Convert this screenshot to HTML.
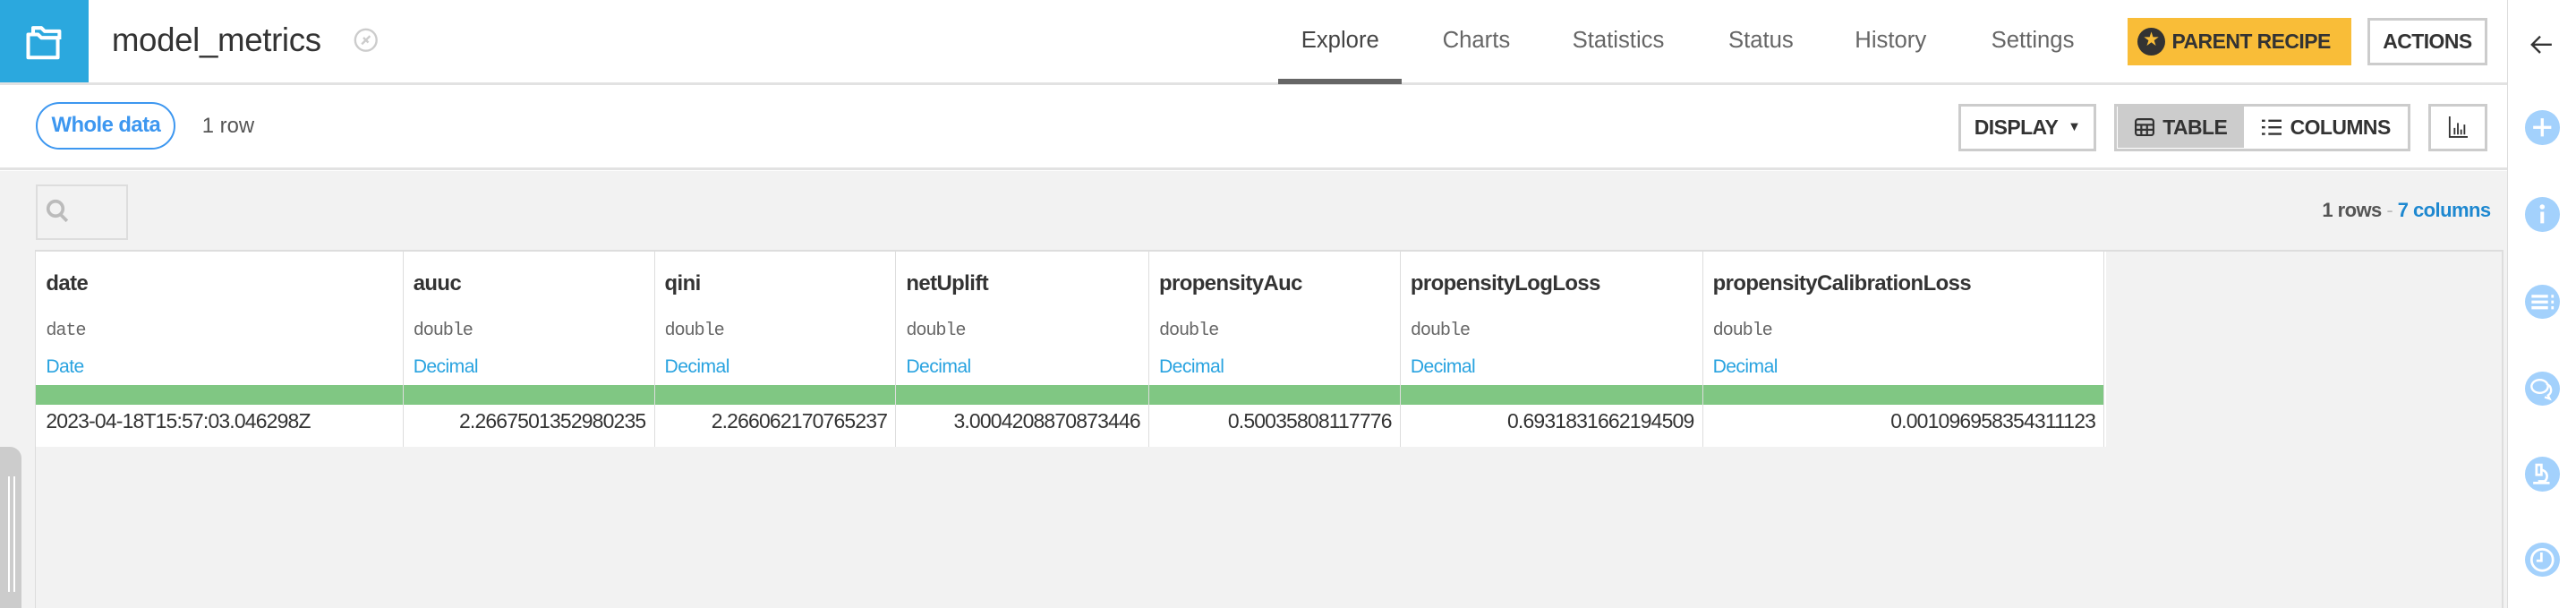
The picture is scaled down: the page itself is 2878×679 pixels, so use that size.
<!DOCTYPE html>
<html><head><meta charset="utf-8"><style>
html,body{margin:0;padding:0;background:#fff;}
body{width:2878px;height:678px;overflow:hidden;}
#w{zoom:1.8355;width:1568px;height:370px;position:relative;font-family:"Liberation Sans",sans-serif;color:#333;overflow:hidden;}
.a{position:absolute;}
.nav{position:absolute;top:17px;font-size:14px;color:#666;}
.btn{position:absolute;box-sizing:border-box;font-size:12.5px;font-weight:bold;display:flex;align-items:center;justify-content:center;letter-spacing:-0.3px;}
.col{position:absolute;top:0;height:119px;border-left:1px solid #ddd;box-sizing:border-box;}
.nm{position:absolute;top:12px;left:6px;font-size:13px;font-weight:bold;letter-spacing:-0.3px;color:#333;}
.ty{position:absolute;top:42px;left:6px;font-family:"Liberation Mono",monospace;font-size:11px;color:#666;letter-spacing:-0.6px;}
.mn{position:absolute;top:64px;left:6px;font-size:11.5px;color:#29a3e0;letter-spacing:-0.3px;}
.v{position:absolute;top:96px;right:5px;font-size:12.5px;color:#333;letter-spacing:-0.45px;}
.ic{position:absolute;left:1537px;width:21px;height:21px;border-radius:50%;background:#a3d1fc;}
</style></head><body><div id="w">
<div class="a" style="left:0;top:0;width:1526px;height:50px;border-bottom:2px solid #e2e2e2;background:#fff"></div>
<div class="a" style="left:0;top:0;width:54px;height:50px;background:#2ba8de"></div>
<svg class="a" style="left:14px;top:12px" width="26" height="26" viewBox="0 0 26 26" fill="none" stroke="#fff" stroke-width="2.2" stroke-linejoin="round"><path d="M3 9h6l2 2h10v12H3z"/><path d="M6 9V5h5l2 2h9v5"/></svg>
<div class="a" style="left:68px;top:13px;font-size:20px;color:#333;letter-spacing:-0.2px">model_metrics</div>
<svg class="a" style="left:215px;top:17px" width="15" height="15" viewBox="0 0 15 15" fill="none" stroke="#ccc" stroke-width="1.3"><circle cx="7.5" cy="7.5" r="6.5"/><path d="M5 10l5-5M6 6l3 3"/></svg>
<div class="nav" style="left:792px;color:#444;">Explore</div>
<div class="a" style="left:778px;top:48px;width:75px;height:3px;background:#666"></div>
<div class="nav" style="left:878px;">Charts</div>
<div class="nav" style="left:957px;">Statistics</div>
<div class="nav" style="left:1052px;">Status</div>
<div class="nav" style="left:1129px;">History</div>
<div class="nav" style="left:1212px;">Settings</div>
<div class="btn" style="left:1295px;top:11px;width:136px;height:29px;background:#f9bd38;color:#333;justify-content:flex-start;padding-left:6px">
<span style="display:inline-block;width:17px;height:17px;border-radius:50%;background:#333;margin-right:4px;position:relative"><span style="position:absolute;left:4px;top:1px;color:#f9bd38;font-size:10px">★</span></span>PARENT RECIPE</div>
<div class="btn" style="left:1441px;top:11px;width:73px;height:29px;border:2px solid #ccc;background:#fff">ACTIONS</div>
<div class="a" style="left:1526px;top:0;width:42px;height:370px;border-left:1px solid #ddd;box-sizing:border-box;background:#fff"></div>
<svg class="a" style="left:1540px;top:20px" width="14" height="14" viewBox="0 0 14 14" fill="none" stroke="#333" stroke-width="1.3"><path d="M13 7H1M6 2L1 7l5 5"/></svg>
<div class="ic" style="top:67px"><svg width="21" height="21"><path d="M10.5 5v11M5 10.5h11" stroke="#fff" stroke-width="1.8"/></svg></div>
<div class="ic" style="top:120px"><svg width="21" height="21"><circle cx="10.5" cy="6" r="1.5" fill="#fff"/><path d="M10.5 9v7" stroke="#fff" stroke-width="2.2"/></svg></div>
<div class="ic" style="top:173px"><svg width="21" height="21" stroke="#fff" stroke-width="1.8"><path d="M4 7h10M4 10.5h10M4 14h10M16 7h1.5M16 10.5h1.5M16 14h1.5"/></svg></div>
<div class="ic" style="top:226px"><svg width="21" height="21" fill="none" stroke="#fff" stroke-width="1.3"><ellipse cx="9" cy="9" rx="5" ry="4"/><path d="M13 7.5a4.5 4 0 0 1 1 7l1 2-3-1"/></svg></div>
<div class="ic" style="top:278px"><svg width="21" height="21" fill="none" stroke="#fff" stroke-width="1.5"><path d="M7 5h3v6H7zM10 8a4 4 0 0 1 2 7H8M5 16h10"/></svg></div>
<div class="ic" style="top:330px"><svg width="21" height="21" fill="none" stroke="#fff" stroke-width="1.5"><circle cx="10.5" cy="10.5" r="6.5"/><path d="M10 6v5H7"/></svg></div>
<div class="a" style="left:0;top:52px;width:1526px;height:50px;background:#fff;border-bottom:2px solid #e2e2e2"></div>
<div class="btn" style="left:22px;top:62px;width:85px;height:29px;border:1.5px solid #3d97f0;border-radius:15px;color:#3d97f0;font-size:13px">Whole data</div>
<div class="a" style="left:123px;top:69px;font-size:13px;color:#555">1 row</div>
<div class="btn" style="left:1192px;top:63px;width:84px;height:29px;border:2px solid #ccc;background:#fff">DISPLAY <span style="font-size:8px;margin-left:6px">▼</span></div>
<div class="btn" style="left:1287px;top:63px;width:180px;height:29px;border:2px solid #ccc;background:#fff"></div>
<div class="btn" style="left:1289px;top:65px;width:77px;height:25px;background:#ccc">
<svg width="12" height="11" style="margin-right:5px" fill="none" stroke="#333" stroke-width="1.2"><rect x="0.6" y="0.6" width="10.8" height="9.8" rx="1.5"/><path d="M0.6 4h10.8M0.6 7h10.8M4 4v6.4M7.5 4v6.4"/></svg>TABLE</div>
<div class="btn" style="left:1366px;top:65px;width:100px;height:25px;">
<svg width="12" height="10" style="margin-right:5px" stroke="#333" stroke-width="1.3"><path d="M0 1h2M4 1h8M0 5h2M4 5h8M0 9h2M4 9h8"/></svg>COLUMNS</div>
<div class="btn" style="left:1478px;top:63px;width:36px;height:29px;border:2px solid #ccc;background:#fff">
<svg width="12" height="13" fill="none" stroke="#333" stroke-width="1"><path d="M1 0v12.5h11M4 11V7M6 11V4M8 11V8M10 11V5"/></svg></div>
<div class="a" style="left:0;top:104px;width:1526px;height:266px;background:#f2f2f2"></div>
<div class="a" style="left:22px;top:112px;width:56px;height:34px;border:1.5px solid #ddd;box-sizing:border-box"></div>
<svg class="a" style="left:28px;top:121px" width="14" height="15" fill="none" stroke="#bbb" stroke-width="2"><circle cx="6" cy="6" r="4.5"/><path d="M9 9.5l4 4"/></svg>
<div class="a" style="right:52px;top:121px;font-size:12px;font-weight:bold;color:#555;letter-spacing:-0.3px">1 rows <span style="color:#bbb;font-weight:normal">-</span> <span style="color:#1e88d0">7 columns</span></div>
<div class="a" style="left:21px;top:153px;width:1px;height:217px;background:#ddd"></div>
<div class="a" style="left:1523px;top:153px;width:1px;height:217px;background:#ddd"></div>
<div class="a" style="left:21px;top:152px;width:1503px;height:1px;background:#ddd"></div>
<div class="a" style="left:0;top:272px;width:13px;height:108px;background:#ccc;border-radius:0 7px 7px 0"></div>
<div class="a" style="left:5px;top:290px;width:1px;height:70px;background:#fff"></div>
<div class="a" style="left:8px;top:290px;width:1px;height:70px;background:#fff"></div>
<div class="a" style="left:22px;top:153px;width:1260px;height:119px;background:#fff">
<div class="a" style="left:0;top:81px;width:1259px;height:12px;background:#80c783"></div>
<div class="col" style="left:0;width:223px;border-left:none"><div class="nm">date</div><div class="ty">date</div><div class="mn">Date</div><div class="v" style="left:6px;right:auto">2023-04-18T15:57:03.046298Z</div></div>
<div class="col" style="left:223px;width:153px"><div class="nm">auuc</div><div class="ty">double</div><div class="mn">Decimal</div><div class="v">2.2667501352980235</div></div>
<div class="col" style="left:376px;width:147px"><div class="nm">qini</div><div class="ty">double</div><div class="mn">Decimal</div><div class="v">2.266062170765237</div></div>
<div class="col" style="left:523px;width:154px"><div class="nm">netUplift</div><div class="ty">double</div><div class="mn">Decimal</div><div class="v">3.0004208870873446</div></div>
<div class="col" style="left:677px;width:153px"><div class="nm">propensityAuc</div><div class="ty">double</div><div class="mn">Decimal</div><div class="v">0.50035808117776</div></div>
<div class="col" style="left:830px;width:184px"><div class="nm">propensityLogLoss</div><div class="ty">double</div><div class="mn">Decimal</div><div class="v">0.6931831662194509</div></div>
<div class="col" style="left:1014px;width:245px;border-right:1px solid #ddd"><div class="nm">propensityCalibrationLoss</div><div class="ty">double</div><div class="mn">Decimal</div><div class="v">0.001096958354311123</div></div>
</div>
</div></body></html>
